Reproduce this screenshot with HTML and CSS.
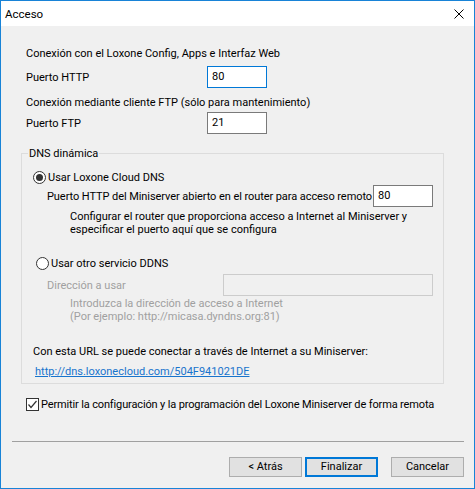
FILE: index.html
```html
<!DOCTYPE html>
<html lang="es">
<head>
<meta charset="utf-8">
<title>Acceso</title>
<link rel="stylesheet" href="styles.css">
</head>
<body>
<div class="window">
  <div class="titlebar">
    <span class="title">Acceso</span>
    <svg class="close" width="10" height="10" viewBox="0 0 10 10"><path d="M0.5 0.5 L9.5 9.5 M9.5 0.5 L0.5 9.5" stroke="#000" stroke-width="1" fill="none"/></svg>
  </div>
  <div class="body">
    <div class="main">
      <p class="line l1">Conexión con el Loxone Config, Apps e Interfaz Web</p>
      <div class="row r-http"><span class="lbl">Puerto HTTP</span><span class="field focus w60">80</span></div>
      <p class="line l2">Conexión mediante cliente FTP (sólo para mantenimiento)</p>
      <div class="row r-ftp"><span class="lbl">Puerto FTP</span><span class="field w60">21</span></div>
      <fieldset class="group">
        <legend>DNS dinámica</legend>
        <div class="opt o1"><span class="radio on"></span><span>Usar Loxone Cloud DNS</span></div>
        <div class="row r-remote"><span class="remote-lbl">Puerto HTTP del Miniserver abierto en el router para acceso remoto</span><span class="field w60">80</span></div>
        <p class="note n1">Configurar el router que proporciona acceso a Internet al Miniserver y<br>especificar el puerto aquí que se configura</p>
        <div class="opt o2"><span class="radio"></span><span>Usar otro servicio DDNS</span></div>
        <div class="row r-addr disabled"><span>Dirección a usar</span><span class="field off w210"></span></div>
        <p class="note n2 disabled">Introduzca la dirección de acceso a Internet<br>(Por ejemplo: http://micasa.dyndns.org:81)</p>
        <p class="line url-cap">Con esta URL se puede conectar a través de Internet a su Miniserver:</p>
        <p class="line url"><a class="link" href="#">http://dns.loxonecloud.com/504F941021DE</a></p>
      </fieldset>
      <div class="opt chk-row">
        <span class="checkbox"><svg width="11" height="11" viewBox="0 0 11 11"><path d="M1.5 5.5 L4 8.5 L9.5 2" stroke="#333" stroke-width="1.2" fill="none"/></svg></span>
        <span class="chk-lbl">Permitir la configuración y la programación del Loxone Miniserver de forma remota</span>
      </div>
    </div>
    <div class="sep"></div>
    <div class="buttons">
      <button class="btn">&lt; Atrás</button>
      <button class="btn default">Finalizar</button>
      <button class="btn cancel">Cancelar</button>
    </div>
  </div>
</div>
</body>
</html>
```

FILE: styles.css
```css
* { box-sizing: border-box; }
html, body { margin: 0; padding: 0; }
body {
  font-family: Roboto, "Noto Sans", sans-serif;
  font-size: 11px;
  color: #000;
  background: #fff;
}
.window {
  width: 475px;
  height: 489px;
  border: 1px solid #1883d7;
  display: flex;
  flex-direction: column;
}
.titlebar {
  height: 25px;
  background: #fff;
  display: flex;
  align-items: center;
  justify-content: space-between;
  padding: 0 10px 0 4px;
  font-size: 11.5px;
}
.close { display: block; }
.body {
  flex: 1;
  background: #f0f0f0;
  display: flex;
  flex-direction: column;
}
.main { padding-left: 20px; }
p { margin: 0; }
.line { line-height: 15px; white-space: nowrap; }
.l1 { margin: 20px 0 0 5px; }
.l2 { margin: 7px 0 0 5px; }
.row {
  display: flex;
  align-items: center;
  height: 22px;
  white-space: nowrap;
}
.r-http { margin: 5px 0 0 5px; }
.r-ftp { margin: 2px 0 0 5px; }
.lbl { width: 181px; }
.field {
  height: 22px;
  border: 1px solid #7a7a7a;
  background: #fff;
  padding: 0 4px;
  line-height: 19px;
  display: block;
}
.field.focus { border-color: #0078d7; }
.field.off { border-color: #cccccc; background: #f0f0f0; }
.w60 { width: 60px; }
.w210 { width: 210px; }
.group {
  margin: 12px 0 0 0;
  padding: 0 0 4px 0;
  width: 423px;
  border: 1px solid #dcdcdc;
  min-inline-size: 0;
}
.group legend {
  padding: 0 1px;
  margin-left: 6px;
  line-height: 15px;
}
.opt {
  display: flex;
  align-items: center;
  height: 15px;
  white-space: nowrap;
}
.o1 { margin-top: 9px; padding-left: 11px; }
.o2 { margin-top: 20px; padding-left: 14px; }
.radio {
  width: 13px;
  height: 13px;
  border: 1px solid #333;
  border-radius: 50%;
  background: #fff;
  margin-right: 2px;
  display: flex;
  align-items: center;
  justify-content: center;
  flex: none;
}
.radio.on::after {
  content: "";
  width: 7px;
  height: 7px;
  border-radius: 50%;
  background: #333;
}
.r-remote { padding: 0 10px 0 25px; justify-content: space-between; }
.remote-lbl { letter-spacing: -0.07px; }
.r-addr { margin-top: 3px; padding: 0 10px 0 25px; justify-content: space-between; }
.note { line-height: 13px; padding-left: 48px; white-space: nowrap; }
.n1 { margin-top: 3px; }
.n2 { margin-top: 1px; }
.disabled { color: #a0a0a0; }
.url-cap { margin-top: 21px; padding-left: 11px; }
.url { margin-top: 5px; padding-left: 13px; }
.link { color: #1874cd; text-decoration: underline; }
.chk-row { margin-top: 13px; padding-left: 5px; }
.chk-lbl { letter-spacing: -0.14px; }
.checkbox {
  width: 13px;
  height: 13px;
  border: 1px solid #333;
  background: #fff;
  margin-right: 2px;
  display: flex;
  align-items: center;
  justify-content: center;
  flex: none;
}
.checkbox svg { display: block; }
.sep {
  margin: 29px 10px 0 11px;
  height: 1px;
  background: #a0a0a0;
}
.buttons {
  margin-top: 15px;
  padding-right: 10px;
  display: flex;
  justify-content: flex-end;
  gap: 3px;
}
.btn {
  width: 73px;
  height: 20px;
  border: 1px solid #adadad;
  background: #e1e1e1;
  font-family: inherit;
  font-size: 11px;
  color: #000;
  padding: 0;
  line-height: 16px;
}
.btn.default { border: 2px solid #0078d7; }
.btn.cancel { margin-left: 10px; }
```
